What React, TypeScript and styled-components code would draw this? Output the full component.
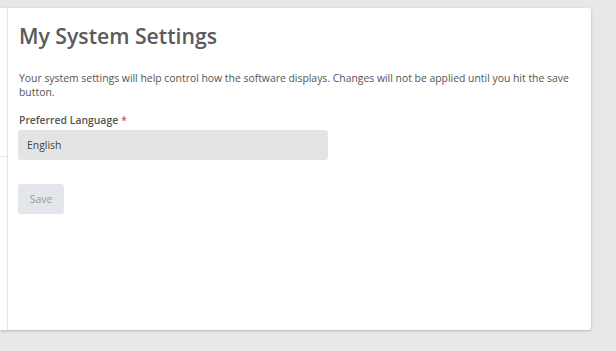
import React from "react";
import styled, { createGlobalStyle } from "styled-components";

const Global = createGlobalStyle`
  html, body { margin: 0; padding: 0; }
  body {
    background: #e8e8e8;
    font-family: "Open Sans", "Noto Sans", sans-serif;
    color: #555;
  }
`;

const Page = styled.div`
  padding-top: 8px;
  width: 616px;
  height: 351px;
  box-sizing: border-box;
`;

const Card = styled.div`
  width: 591px;
  height: 322px;
  background: #fff;
  border-radius: 0 3px 3px 0;
  box-shadow: 0 1px 3px rgba(0, 0, 0, 0.22);
  display: flex;
`;

const Sidebar = styled.div`
  width: 7px;
  border-right: 1px solid #e4e4e4;
  display: flex;
  flex-direction: column;
`;

const SidebarHead = styled.div`
  height: 148px;
  border-bottom: 1px solid #e4e4e4;
`;

const Content = styled.div`
  flex: 1;
  padding: 13px 0 0 10px;
  display: flex;
  flex-direction: column;
  align-items: flex-start;
`;

const Title = styled.h1`
  margin: 0;
  font-size: 21.2px;
  line-height: 30px;
  font-weight: 600;
  color: #5b5b5b;
  padding-left: 1px;
`;

const Description = styled.p`
  margin: 21px 0 0 1px;
  font-size: 10.4px;
  line-height: 13.5px;
  color: #555;
  width: 560px;
`;

const Label = styled.label`
  margin: 15px 0 0 1px;
  font-size: 10.4px;
  line-height: 13.5px;
  font-weight: 600;
  color: #555;
`;

const Required = styled.span`
  color: #d9534f;
  margin-left: 3px;
`;

const Select = styled.div`
  margin-top: 2px;
  width: 310px;
  height: 30px;
  box-sizing: border-box;
  padding-left: 9px;
  display: flex;
  align-items: center;
  background: #e4e4e4;
  border-radius: 3px;
  font-size: 10.4px;
  color: #444;
`;

const SaveButton = styled.button`
  margin-top: 24px;
  width: 46px;
  height: 30px;
  border: none;
  border-radius: 3px;
  background: #e3e7eb;
  color: #999;
  font-family: "Open Sans", "Noto Sans", sans-serif;
  font-size: 10.4px;
  padding: 0;
`;

export default function App() {
  return (
    <>
      <Global />
      <Page>
        <Card>
          <Sidebar>
            <SidebarHead />
          </Sidebar>
          <Content>
            <Title>My System Settings</Title>
            <Description>
              Your system settings will help control how the software displays. Changes will not be applied until you hit the save button.
            </Description>
            <Label>
              Preferred Language<Required>*</Required>
            </Label>
            <Select>English</Select>
            <SaveButton>Save</SaveButton>
          </Content>
        </Card>
      </Page>
    </>
  );
}
